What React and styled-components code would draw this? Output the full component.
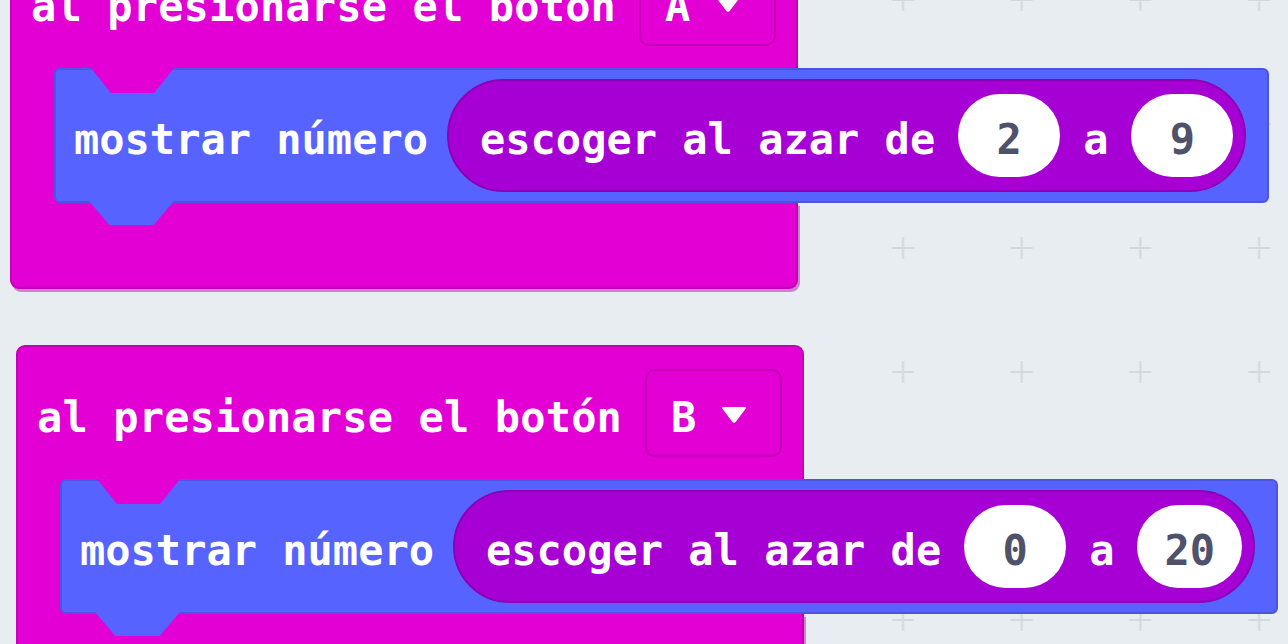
import React from "react";
import styled, { createGlobalStyle } from "styled-components";

const MAGENTA = "#e200d4";
const MAGENTA_EDGE = "#c300b5";
const BLUE = "#5763ff";
const BLUE_EDGE = "#4b55e0";
const PURPLE = "#a700d4";
const PURPLE_EDGE = "#8c00b6";
const CANVAS = "#e8edf1";

const Global = createGlobalStyle`
  *, *::before, *::after { box-sizing: border-box; }
  html, body { margin: 0; padding: 0; background: ${CANVAS}; }
  body { font-family: "DejaVu Sans Mono", "Liberation Mono", monospace; }
`;

const Workspace = styled.main`
  position: relative;
  width: 1288px;
  height: 644px;
  overflow: hidden;
  background: ${CANVAS};
`;

const GridLayer = styled.svg`
  position: absolute;
  inset: 0;
  width: 100%;
  height: 100%;
`;

const BlockColumn = styled.div`
  position: relative;
  display: flex;
  flex-direction: column;
  align-items: flex-start;
  gap: 56px;
  margin-top: -66px;
`;

const EventBlock = styled.section`
  display: flex;
  flex-direction: column;
  margin-left: ${(p) => p.$x}px;
`;

const Header = styled.div`
  display: flex;
  align-items: center;
  gap: 23px;
  padding: 22px 20px 22px 19px;
  background: ${MAGENTA};
  border: 2px solid ${MAGENTA_EDGE};
  border-bottom: none;
  border-radius: 9px 9px 0 0;
`;

const Label = styled.span`
  padding-top: 9px;
  font-size: 42px;
  line-height: 1;
  font-weight: 700;
  letter-spacing: ${(p) => p.$spacing || 0}px;
  color: #ffffff;
  white-space: pre;
`;

const Dropdown = styled.div`
  display: flex;
  align-items: center;
  gap: 25px;
  height: 88px;
  padding: 0 33px 0 24px;
  background: ${MAGENTA};
  border: 2px solid ${MAGENTA_EDGE};
  border-radius: 10px;
`;

const Caret = styled.svg`
  width: 26px;
  height: 17px;
  margin-top: 2px;
`;

const Body = styled.div`
  display: flex;
  width: 0;
  min-width: 100%;
  padding-left: 42px;
  background: ${MAGENTA};
  border-left: 2px solid ${MAGENTA_EDGE};
`;

const Statement = styled.div`
  position: relative;
  z-index: 1;
  flex: none;
  display: flex;
  align-items: center;
  gap: 19px;
  padding: 9px 21px 9px 18px;
  background: ${BLUE};
  border: 2px solid ${BLUE_EDGE};
  border-radius: 6px;

  &::before {
    content: "";
    position: absolute;
    top: -2px;
    left: 35px;
    width: 83px;
    height: 25px;
    background: ${(p) => p.$host};
    clip-path: polygon(0 0, 100% 0, 76% 100%, 24% 100%);
  }

  &::after {
    content: "";
    position: absolute;
    top: 100%;
    left: 33px;
    width: 85px;
    height: 24px;
    background: ${BLUE};
    clip-path: polygon(0 0, 100% 0, 76% 100%, 24% 100%);
  }
`;

const Reporter = styled.div`
  display: flex;
  align-items: center;
  gap: 23px;
  padding: 13px 11px 13px 31px;
  background: ${PURPLE};
  border: 2px solid ${PURPLE_EDGE};
  border-radius: 60px;
`;

const NumberField = styled.span`
  display: inline-flex;
  align-items: center;
  justify-content: center;
  height: 83px;
  min-width: 102px;
  padding: 9px 27px 0;
  background: #ffffff;
  border-radius: 42px;
  font-size: 42px;
  line-height: 1;
  font-weight: 700;
  color: #4f526b;
`;

const Foot = styled.div`
  height: ${(p) => p.$h}px;
  background: ${MAGENTA};
  border: 2px solid ${MAGENTA_EDGE};
  border-top: none;
  border-radius: 0 0 9px 9px;
  box-shadow: 2px 3px 0 rgba(170, 0, 160, 0.45);
`;

function ButtonEvent({ x, button, from, to, footHeight }) {
  return (
    <EventBlock $x={x}>
      <Header>
        <Label $spacing={0.15}>al presionarse el botón</Label>
        <Dropdown>
          <Label>{button}</Label>
          <Caret viewBox="0 0 26 17">
            <path d="M2 2 H24 L14.2 15 Q13 16.4 11.8 15 Z" fill="#ffffff" stroke="#ffffff" strokeWidth="2" strokeLinejoin="round" />
          </Caret>
        </Dropdown>
      </Header>
      <Body>
        <Statement $host={MAGENTA}>
          <Label>mostrar número</Label>
          <Reporter>
            <Label>escoger al azar de</Label>
            <NumberField>{from}</NumberField>
            <Label>a</Label>
            <NumberField>{to}</NumberField>
          </Reporter>
        </Statement>
      </Body>
      <Foot $h={footHeight} />
    </EventBlock>
  );
}

export default function App() {
  return (
    <Workspace>
      <Global />
      <GridLayer aria-hidden="true">
        <defs>
          <pattern id="ws-grid" x="843.65" y="-62" width="118.7" height="124" patternUnits="userSpaceOnUse">
            <path d="M48.35 62 H70.35 M59.35 51 V73" stroke="#d3d8dc" strokeWidth="2" />
          </pattern>
        </defs>
        <rect width="100%" height="100%" fill="url(#ws-grid)" />
      </GridLayer>
      <BlockColumn>
        <ButtonEvent x={10} button="A" from="2" to="9" footHeight={86} />
        <ButtonEvent x={16} button="B" from="0" to="20" footHeight={200} />
      </BlockColumn>
    </Workspace>
  );
}
